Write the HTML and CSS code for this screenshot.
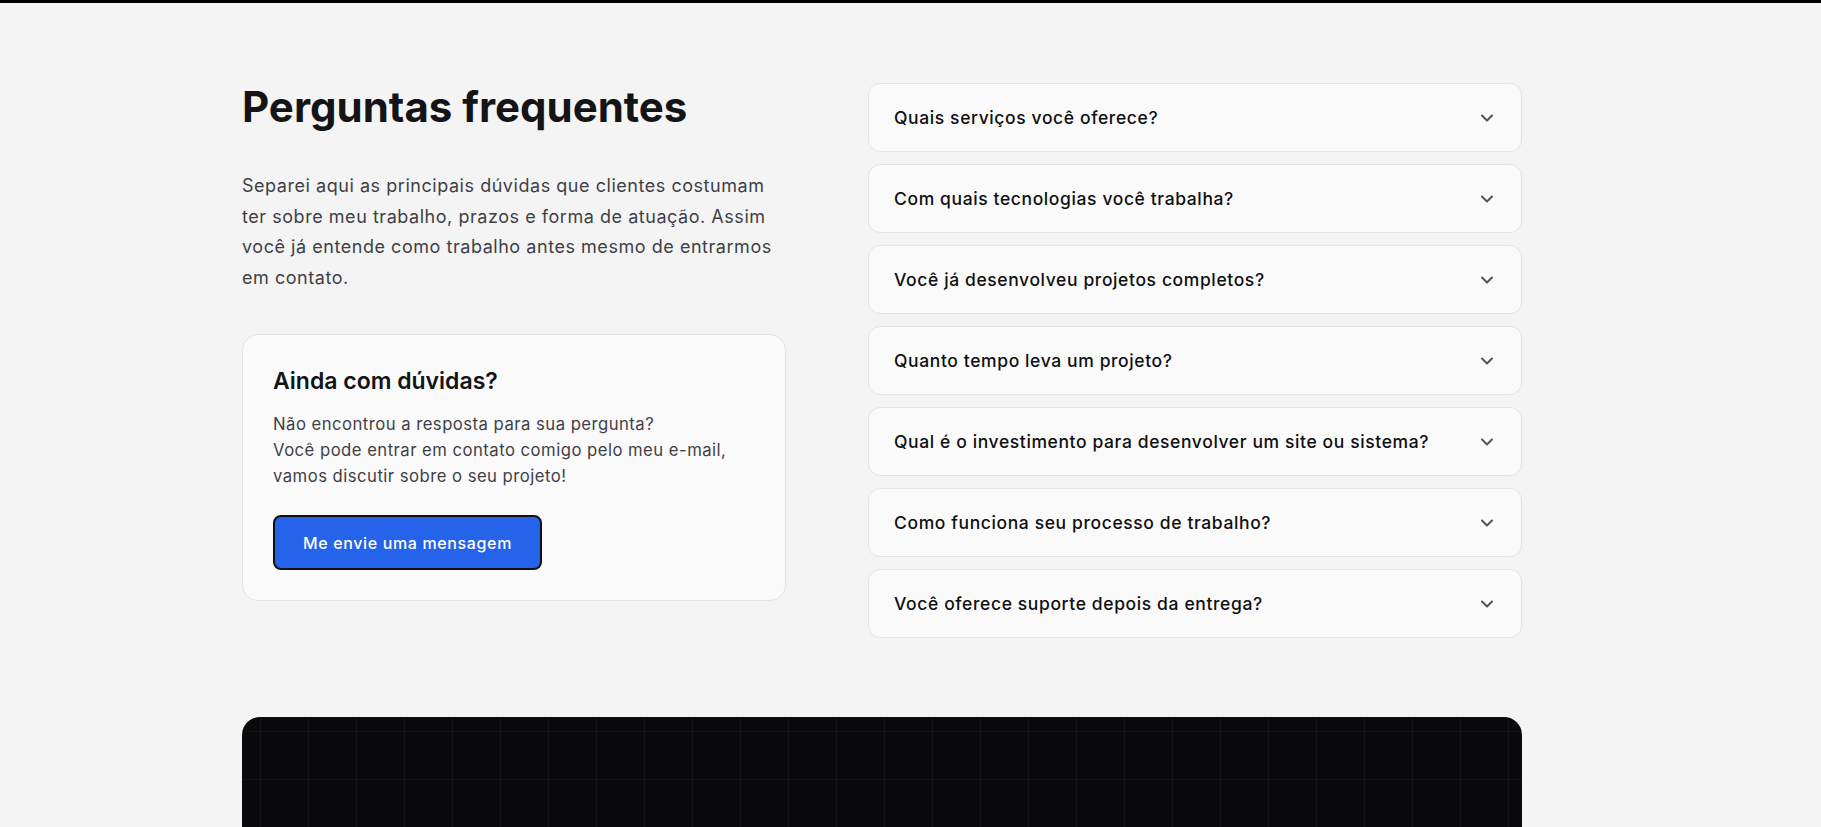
FILE: index.html
```html
<!DOCTYPE html>
<html lang="pt-BR">
<head>
<meta charset="utf-8">
<title>Perguntas frequentes</title>
<link rel="stylesheet" href="styles.css">
</head>
<body>
<div class="topbar"></div>
<section class="faq">
  <div class="container faq-grid">
    <div class="faq-intro">
      <h2 class="faq-title">Perguntas frequentes</h2>
      <p class="faq-lead">Separei aqui as principais dúvidas que clientes costumam ter sobre meu trabalho, prazos e forma de atuação. Assim você já entende como trabalho antes mesmo de entrarmos em contato.</p>
      <div class="help-card">
        <h3 class="help-title">Ainda com dúvidas?</h3>
        <p class="help-text">Não encontrou a resposta para sua pergunta?<br>Você pode entrar em contato comigo pelo meu e-mail, vamos discutir sobre o seu projeto!</p>
        <button class="help-btn" type="button">Me envie uma mensagem</button>
      </div>
    </div>
    <div class="faq-list">
      <div class="faq-item"><span class="faq-q">Quais serviços você oferece?</span><svg class="chev" viewBox="0 0 24 24"><path d="m6 9 6 6 6-6"/></svg></div>
      <div class="faq-item"><span class="faq-q">Com quais tecnologias você trabalha?</span><svg class="chev" viewBox="0 0 24 24"><path d="m6 9 6 6 6-6"/></svg></div>
      <div class="faq-item"><span class="faq-q">Você já desenvolveu projetos completos?</span><svg class="chev" viewBox="0 0 24 24"><path d="m6 9 6 6 6-6"/></svg></div>
      <div class="faq-item"><span class="faq-q">Quanto tempo leva um projeto?</span><svg class="chev" viewBox="0 0 24 24"><path d="m6 9 6 6 6-6"/></svg></div>
      <div class="faq-item"><span class="faq-q">Qual é o investimento para desenvolver um site ou sistema?</span><svg class="chev" viewBox="0 0 24 24"><path d="m6 9 6 6 6-6"/></svg></div>
      <div class="faq-item"><span class="faq-q">Como funciona seu processo de trabalho?</span><svg class="chev" viewBox="0 0 24 24"><path d="m6 9 6 6 6-6"/></svg></div>
      <div class="faq-item"><span class="faq-q">Você oferece suporte depois da entrega?</span><svg class="chev" viewBox="0 0 24 24"><path d="m6 9 6 6 6-6"/></svg></div>
    </div>
  </div>
</section>
<section class="cta">
  <div class="container cta-box"></div>
</section>
</body>
</html>
```

FILE: styles.css
```css
* { box-sizing: border-box; }
html, body { margin: 0; padding: 0; }
body {
  background: #f4f4f4;
  font-family: Inter, "Noto Sans", sans-serif;
  color: #18181b;
  overflow: hidden;
}
.topbar { height: 3px; background: #000; }
.container { width: 1280px; margin-left: 242px; }
.faq { padding: 80px 0 79px; }
.faq-grid {
  display: grid;
  grid-template-columns: 544px 654px;
  column-gap: 82px;
  align-items: start;
}
.faq-title {
  margin: 0;
  font-size: 42px;
  line-height: 48px;
  font-weight: 700;
  letter-spacing: 0;
  color: #141416;
}
.faq-lead {
  margin: 40px 0 0;
  font-size: 18px;
  line-height: 30.6px;
  letter-spacing: 0.03em;
  color: #3f3f46;
  max-width: 544px;
}
.help-card {
  margin-top: 41px;
  background: #fafafa;
  border: 1px solid #e4e4e7;
  border-radius: 16px;
  padding: 30px;
}
.help-title {
  margin: 0;
  font-size: 23px;
  line-height: 33px;
  font-weight: 600;
  color: #141416;
}
.help-text {
  margin: 14px 0 0;
  font-size: 16.7px;
  line-height: 25.6px;
  letter-spacing: 0.028em;
  color: #3f3f46;
}
.help-btn {
  margin-top: 26px;
  display: block;
  width: 269px;
  height: 55px;
  background: #2563eb;
  color: #fff;
  border: 2px solid #111;
  border-radius: 8px;
  font-family: inherit;
  font-size: 16px;
  letter-spacing: 0.04em;
  font-weight: 500;
  cursor: pointer;
}
.faq-list { display: flex; flex-direction: column; gap: 12px; }
.faq-item {
  height: 69px;
  display: flex;
  align-items: center;
  justify-content: space-between;
  padding: 0 24px 0 25px;
  background: #fafafa;
  border: 1px solid #e4e4e7;
  border-radius: 12px;
}
.faq-q { font-size: 17.5px; font-weight: 500; letter-spacing: 0.035em; color: #0f0f11; }
.chev {
  width: 20px; height: 20px;
  fill: none; stroke: #52525b; stroke-width: 2.4;
  stroke-linecap: round; stroke-linejoin: round;
}
.cta-box {
  height: 200px;
  border-radius: 18px 18px 0 0;
  background-color: #0a0a0c;
  background-image:
    linear-gradient(rgba(255,255,255,0.035) 1px, transparent 1px),
    linear-gradient(90deg, rgba(255,255,255,0.035) 1px, transparent 1px);
  background-size: 48px 48px;
  background-position: 18px 14px;
}
```
